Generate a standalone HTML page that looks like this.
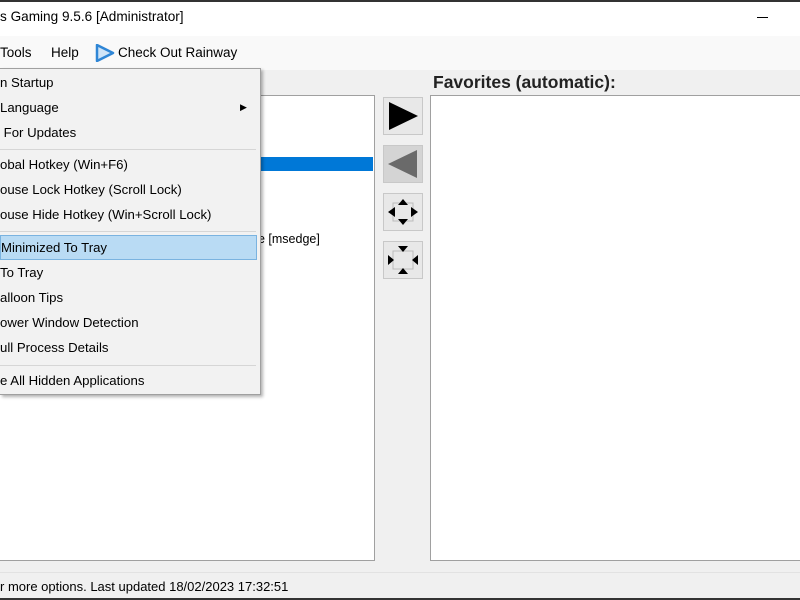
<!DOCTYPE html>
<html><head><style>
*{margin:0;padding:0;box-sizing:border-box}
body{width:800px;height:600px;overflow:hidden;background:#f0f0f0;font-family:"Liberation Sans",sans-serif;font-size:13.2px;color:#000;position:relative}
.a{position:absolute;white-space:nowrap}
.mi{position:absolute;left:0;height:25px;line-height:25px;width:258px;white-space:nowrap}
.sep{position:absolute;left:0;width:256px;height:1px;background:#d6d6d6}
.btn{position:absolute;left:383px;width:40px;height:38px;background:#e8e8e8;border:1px solid #c8c8c8}
</style></head><body>
<div class="a" style="left:0;top:0;width:800px;height:2px;background:#333"></div>
<div class="a" style="left:0;top:2px;width:800px;height:34px;background:#fff"></div>
<div class="a" style="left:0;top:9px;font-size:13.6px">s Gaming 9.5.6 [Administrator]</div>
<div class="a" style="left:757px;top:17px;width:11px;height:1px;background:#000"></div>
<div class="a" style="left:0;top:36px;width:800px;height:34px;background:#f9f9f9"></div>
<div class="a" style="left:0;top:45px;font-size:13.5px">Tools</div>
<div class="a" style="left:51px;top:45px;font-size:13.5px">Help</div>
<svg class="a" style="left:95px;top:44px" width="20" height="18"><path d="M2 1 L18 9 L2 17 Z" fill="#cfe4f7" stroke="#2f86d6" stroke-width="2.5" stroke-linejoin="round"/></svg>
<div class="a" style="left:118px;top:45px;font-size:13.5px">Check Out Rainway</div>
<div class="a" style="left:433px;top:72px;font-size:17.5px;font-weight:bold;color:#222">Favorites (automatic):</div>
<div class="a" style="left:0;top:95px;width:375px;height:466px;background:#fff;border:1px solid #a0a0a0;border-left:none"></div>
<div class="a" style="left:260px;top:157px;width:113px;height:14px;background:#0078d7"></div>
<div class="a" style="left:258px;top:232px;font-size:12.5px">e [msedge]</div>
<div class="a" style="left:430px;top:95px;width:370px;height:466px;background:#fff;border:1px solid #a0a0a0;border-right:none"></div>
<div class="btn" style="top:97px"><svg width="38" height="36"><path d="M5 4 L34 18 L5 32 Z" fill="#000"/></svg></div>
<div class="btn" style="top:145px;background:#d4d4d4"><svg width="38" height="36"><path d="M33 4 L4 18 L33 32 Z" fill="#6a6a6a"/></svg></div>
<div class="btn" style="top:193px"><svg width="38" height="36"><rect x="9" y="9" width="20" height="18" fill="none" stroke="#bbb"/><path d="M14 11 L19 5 L24 11Z M14 25 L19 31 L24 25Z M11 13 L4 18 L11 23Z M27 13 L34 18 L27 23Z" fill="#000"/></svg></div>
<div class="btn" style="top:241px"><svg width="38" height="36"><rect x="9" y="9" width="20" height="18" fill="none" stroke="#bbb"/><path d="M14 4 L19 10 L24 4Z M14 32 L19 26 L24 32Z M4 13 L10 18 L4 23Z M34 13 L28 18 L34 23Z" fill="#000"/></svg></div>
<div class="a" style="left:0;top:572px;width:800px;height:1px;background:#e2e2e2"></div>
<div class="a" style="left:0;top:579px;font-size:13px">r more options. Last updated 18/02/2023 17:32:51</div>
<div class="a" style="left:0;top:598px;width:800px;height:2px;background:#333"></div>
<div class="a" style="left:0;top:68px;width:261px;height:327px;background:#f2f2f2;border:1px solid #a0a0a0;border-left:none;box-shadow:2px 2px 3px rgba(0,0,0,.3)">
<div class="mi" style="top:1px">n Startup</div>
<div class="mi" style="top:26px">Language<span style="position:absolute;left:240px;top:0;font-size:9px">&#9654;</span></div>
<div class="mi" style="top:51px">&nbsp;For Updates</div>
<div class="sep" style="top:80px"></div>
<div class="mi" style="top:83px">obal Hotkey (Win+F6)</div>
<div class="mi" style="top:108px">ouse Lock Hotkey (Scroll Lock)</div>
<div class="mi" style="top:133px">ouse Hide Hotkey (Win+Scroll Lock)</div>
<div class="sep" style="top:162px"></div>
<div class="mi" style="top:166px;background:#b9dbf4;border:1px solid #7ab3e0;line-height:23px;width:257px">Minimized To Tray</div>
<div class="mi" style="top:191px">To Tray</div>
<div class="mi" style="top:216px">alloon Tips</div>
<div class="mi" style="top:241px">ower Window Detection</div>
<div class="mi" style="top:266px">ull Process Details</div>
<div class="sep" style="top:296px"></div>
<div class="mi" style="top:299px">e All Hidden Applications</div>
</div>
</body></html>
